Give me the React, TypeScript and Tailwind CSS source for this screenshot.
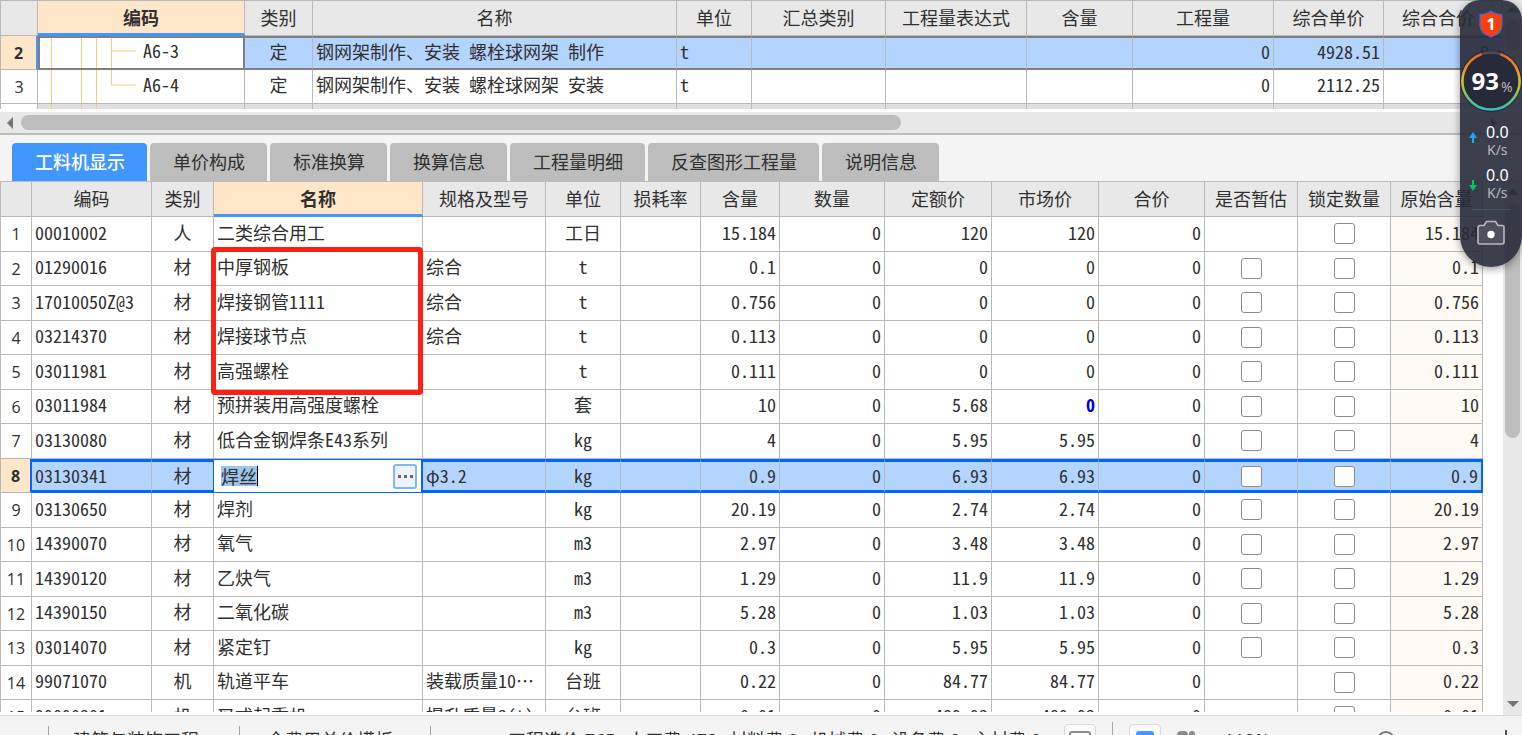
import { clsx } from "clsx";

const TEXT_FONT = "font-['Noto_Sans_CJK_SC',sans-serif] [font-feature-settings:'hwid']";
const UI_FONT = "font-['Open_Sans','Noto_Sans_CJK_SC',sans-serif]";
const LINE = "border-[#b9b9b9]";

interface Column {
  label: string;
  width?: number;
}

interface Resource {
  code: string;
  kind: string;
  name: string;
  spec?: string;
  unit: string;
  amount: string;
  quota: string;
  market: string;
  estimate?: boolean;
  changed?: boolean;
}

const itemColumns: Column[] = [
  { label: "编码", width: 207 },
  { label: "类别", width: 68 },
  { label: "名称" },
  { label: "单位", width: 75 },
  { label: "汇总类别", width: 134 },
  { label: "工程量表达式", width: 141 },
  { label: "含量", width: 106 },
  { label: "工程量", width: 141 },
  { label: "综合单价", width: 110 },
  { label: "综合合价", width: 109 },
  { label: "", width: 10 },
];

const items = [
  { no: 2, code: "A6-3", name: "钢网架制作、安装 螺栓球网架 制作", price: "4928.51", selected: true },
  { no: 3, code: "A6-4", name: "钢网架制作、安装 螺栓球网架 安装", price: "2112.25", selected: false },
];

const resourceColumns: Column[] = [
  { label: "编码", width: 120 },
  { label: "类别", width: 62 },
  { label: "名称" },
  { label: "规格及型号", width: 123 },
  { label: "单位", width: 75 },
  { label: "损耗率", width: 80 },
  { label: "含量", width: 79 },
  { label: "数量", width: 105 },
  { label: "定额价", width: 107 },
  { label: "市场价", width: 107 },
  { label: "合价", width: 106 },
  { label: "是否暂估", width: 93 },
  { label: "锁定数量", width: 93 },
  { label: "原始含量", width: 92 },
];

const resources: Resource[] = [
  { code: "00010002", kind: "人", name: "二类综合用工", unit: "工日", amount: "15.184", quota: "120", market: "120", estimate: false },
  { code: "01290016", kind: "材", name: "中厚钢板", spec: "综合", unit: "t", amount: "0.1", quota: "0", market: "0" },
  { code: "17010050Z@3", kind: "材", name: "焊接钢管1111", spec: "综合", unit: "t", amount: "0.756", quota: "0", market: "0" },
  { code: "03214370", kind: "材", name: "焊接球节点", spec: "综合", unit: "t", amount: "0.113", quota: "0", market: "0" },
  { code: "03011981", kind: "材", name: "高强螺栓", unit: "t", amount: "0.111", quota: "0", market: "0" },
  { code: "03011984", kind: "材", name: "预拼装用高强度螺栓", unit: "套", amount: "10", quota: "5.68", market: "0", changed: true },
  { code: "03130080", kind: "材", name: "低合金钢焊条E43系列", unit: "kg", amount: "4", quota: "5.95", market: "5.95" },
  { code: "03130341", kind: "材", name: "焊丝", spec: "φ3.2", unit: "kg", amount: "0.9", quota: "6.93", market: "6.93" },
  { code: "03130650", kind: "材", name: "焊剂", unit: "kg", amount: "20.19", quota: "2.74", market: "2.74" },
  { code: "14390070", kind: "材", name: "氧气", unit: "m3", amount: "2.97", quota: "3.48", market: "3.48" },
  { code: "14390120", kind: "材", name: "乙炔气", unit: "m3", amount: "1.29", quota: "11.9", market: "11.9" },
  { code: "14390150", kind: "材", name: "二氧化碳", unit: "m3", amount: "5.28", quota: "1.03", market: "1.03" },
  { code: "03014070", kind: "材", name: "紧定钉", unit: "kg", amount: "0.3", quota: "5.95", market: "5.95" },
  { code: "99071070", kind: "机", name: "轨道平车", spec: "装载质量10…", unit: "台班", amount: "0.22", quota: "84.77", market: "84.77", estimate: false },
  { code: "99090301", kind: "机", name: "叉式起重机", spec: "提升质量3(t)", unit: "台班", amount: "0.01", quota: "489.93", market: "489.93", estimate: false },
];

const ACTIVE_RESOURCE = "03130341";
const ANNOTATED_FROM = "01290016";

const tabs = ["工料机显示", "单价构成", "标准换算", "换算信息", "工程量明细", "反查图形工程量", "说明信息"];

const totals = ["工程造价:765", "人工费:473", "材料费:0", "机械费:0", "设备费:0", "主材费:0"];

function Arrow({ className }: { className?: string }) {
  return (
    <svg viewBox="0 0 12 6" className={clsx("h-[6px] w-3 fill-[#74747c]", className)} aria-hidden="true">
      <path d="M0 6L6 0L12 6Z" />
    </svg>
  );
}

function Cols({ first, columns }: { first: number; columns: Column[] }) {
  return (
    <colgroup>
      <col style={{ width: first }} />
      {columns.map((column, i) => (
        <col key={i} style={column.width ? { width: column.width } : undefined} />
      ))}
    </colgroup>
  );
}

function HeaderRow({ columns, active }: { columns: Column[]; active: string }) {
  return (
    <thead>
      <tr className="h-[35px]">
        <th className={clsx("border-x border-b bg-[#e8e8e8]", LINE)} />
        {columns.map((column, i) => (
          <th
            key={i}
            className={clsx(
              "overflow-hidden border-r px-0 pt-0 leading-6 whitespace-nowrap",
              LINE,
              column.label === active
                ? "border-b-3 border-b-[#4197ff] bg-[#ffe6c8] pb-px font-bold"
                : "border-b bg-[#e8e8e8] pb-[2px] font-normal",
            )}
          >
            {column.label}
          </th>
        ))}
      </tr>
    </thead>
  );
}

function TreeLines({ branch }: { branch: "middle" | "last" | "none" }) {
  return (
    <svg className="absolute inset-y-0 left-0 h-full w-[100px]" viewBox="0 0 100 34" preserveAspectRatio="none" fill="none" stroke="#ffc57a" aria-hidden="true">
      <path d="M13.5 0V34M43.5 0V34M58.5 0V34" />
      {branch === "middle" && <path d="M73.5 0V34M73.5 15.5H98" />}
      {branch === "last" && <path d="M73.5 0V15.5H98" />}
    </svg>
  );
}

function ItemGrid() {
  return (
    <section className="flex h-[109px] shrink-0 overflow-hidden">
      <table className={clsx("h-fit min-w-0 flex-1 table-fixed border-separate border-spacing-0 border-t", LINE)}>
        <Cols first={38} columns={itemColumns} />
        <HeaderRow columns={itemColumns} active="编码" />
        <tbody>
          {items.map((item) => {
            const cell = clsx(
              "px-[3px] pt-0 leading-6 whitespace-nowrap overflow-hidden border-r",
              LINE,
              item.selected ? "border-y-2 border-y-[#808080] bg-[#b3d4ff] pb-1" : "border-b pb-[5px]",
            );
            return (
              <tr key={item.no} className="h-[34px]">
                <td
                  className={clsx(
                    "border-b border-l p-0 text-center text-base",
                    UI_FONT,
                    LINE,
                    item.selected ? "border-r-2 border-r-[#4197ff] bg-[#ffe6c8] font-bold" : "border-r",
                  )}
                >
                  {item.no}
                </td>
                <td
                  className={clsx(
                    "relative overflow-hidden border-b px-0 pt-0 pb-[5px] leading-6",
                    item.selected ? "border-[#808080]" : ["border-r", LINE],
                  )}
                >
                  <TreeLines branch={item.selected ? "middle" : "last"} />
                  {item.selected && <span className="absolute inset-0 border-2 border-b-1 border-[#808080]" />}
                  <span className="ml-[105px]">{item.code}</span>
                </td>
                <td className={clsx(cell, "text-center")}>定</td>
                <td className={cell}>{item.name}</td>
                <td className={cell}>t</td>
                <td className={cell} />
                <td className={cell} />
                <td className={cell} />
                <td className={clsx(cell, "text-right")}>0</td>
                <td className={clsx(cell, "text-right")}>{item.price}</td>
                <td className={clsx(cell, "text-right")}>0</td>
                <td className={cell} />
              </tr>
            );
          })}
          <tr className="h-[34px]">
            <td className={clsx("border-x", LINE)} />
            {itemColumns.map((_, i) => (
              <td key={i} className={clsx("relative border-r bg-[#e0e0e0]", LINE)}>
                {i === 0 && <TreeLines branch="none" />}
              </td>
            ))}
          </tr>
        </tbody>
      </table>
      <div className="flex w-[19px] shrink-0 flex-col items-center gap-2 bg-[#e8e8e8] pt-[6px]">
        <Arrow />
        <div className="h-[30px] w-[15px] rounded-full bg-[#bdbdbd]" />
      </div>
    </section>
  );
}

function HorizontalScroll() {
  return (
    <div className="mt-[3px] flex h-[21px] shrink-0 items-center bg-[#e8e8e8] pr-[22px] pl-1">
      <Arrow className="-rotate-90" />
      <div className="ml-[5px] flex-1">
        <div className="h-[15px] w-[60%] rounded-full bg-[#bdbdbd]" />
      </div>
      <Arrow className="rotate-90" />
    </div>
  );
}

function DetailTabs() {
  return (
    <div className={clsx("flex h-[49px] shrink-0 items-end gap-[3px] border-t-2 border-b border-[#bdbdbd] bg-[#f4f4f4] pl-3", UI_FONT)} role="tablist">
      {tabs.map((tab, i) => (
        <button
          key={tab}
          type="button"
          role="tab"
          aria-selected={i === 0}
          className={clsx(
            "h-[38px] rounded-t-sm pr-[22px] pl-[23px] whitespace-nowrap",
            i === 0 ? "bg-[#4197ff] font-medium text-white" : "bg-[#bdbdbd]",
          )}
        >
          {tab}
        </button>
      ))}
    </div>
  );
}

function CheckCell({ className, label, shown = true }: { className: string; label: string; shown?: boolean }) {
  return (
    <td className={className}>
      {shown && (
        <input
          type="checkbox"
          aria-label={label}
          className="mx-auto mt-1 block size-[21px] appearance-none rounded-[3px] border border-[#8c8c8c] bg-white checked:bg-[#4197ff]"
        />
      )}
    </td>
  );
}

function ResourceRow({ row, index }: { row: Resource; index: number }) {
  const active = row.code === ACTIVE_RESOURCE;
  const cell = clsx(
    "px-[3px] pt-0 whitespace-nowrap border-r",
    active ? "border-y-3 border-y-[#0066ff] bg-[#b3d4ff] pb-[3px] leading-5" : "border-b pb-[5px] leading-6",
    LINE,
  );
  const right = clsx(cell, "text-right");
  const center = clsx(cell, "text-center");

  return (
    <tr className="odd:h-[35px] even:h-[34px]">
      <td
        className={clsx(
          "border-b border-l p-0 text-center text-base",
          UI_FONT,
          LINE,
          active ? "border-r-2 border-r-[#0066ff] bg-[#ffe6c8] font-bold" : "border-r",
        )}
      >
        {index + 1}
      </td>
      <td className={cell}>{row.code}</td>
      <td className={clsx(center, active && "border-r-[#0066ff]")}>{row.kind}</td>
      {active ? (
        <td className="border-y border-r-2 border-[#0066ff] bg-white p-0">
          <div className="flex items-center pr-1 pl-[7px]">
            <input
              aria-label="名称"
              defaultValue={row.name}
              size={4}
              className="box-content h-5 w-[36px] border-r border-black bg-[#9cc4ee] p-0 leading-5"
            />
            <button
              type="button"
              aria-label="选择"
              className="ml-auto flex h-[25px] w-6 items-center justify-center gap-[3px] rounded-[3px] border-2 border-[#7db9ee] bg-[#eef1f8]"
            >
              <i className="size-[3px] bg-[#666]" />
              <i className="size-[3px] bg-[#666]" />
              <i className="size-[3px] bg-[#666]" />
            </button>
          </div>
        </td>
      ) : (
        <td className={clsx(cell, "relative")}>
          {row.name}
          {row.code === ANNOTATED_FROM && (
            <span className="pointer-events-none absolute -top-[5px] -left-[3px] z-10 h-[148px] w-[calc(100%+4px)] rounded-sm border-5 border-[#ff2015]" />
          )}
        </td>
      )}
      <td className={cell}>{row.spec}</td>
      <td className={center}>{row.unit}</td>
      <td className={cell} />
      <td className={right}>{row.amount}</td>
      <td className={right}>0</td>
      <td className={right}>{row.quota}</td>
      <td className={clsx(right, row.changed && "font-bold text-[#0000e0]")}>{row.market}</td>
      <td className={right}>0</td>
      <CheckCell className={cell} label={`${row.name} 是否暂估`} shown={row.estimate !== false} />
      <CheckCell className={cell} label={`${row.name} 锁定数量`} />
      <td className={clsx(right, active ? "border-r-2 border-r-[#0066ff]" : "bg-[#fffaf4]")}>{row.amount}</td>
    </tr>
  );
}

function ResourceGrid() {
  return (
    <section className="flex min-h-0 flex-1">
      <div className="mb-[3px] min-w-0 flex-1 overflow-hidden pr-5">
        <table className="w-full table-fixed border-separate border-spacing-0">
          <Cols first={32} columns={resourceColumns} />
          <HeaderRow columns={resourceColumns} active="名称" />
          <tbody>
            {resources.map((row, i) => (
              <ResourceRow key={row.code} row={row} index={i} />
            ))}
          </tbody>
        </table>
      </div>
      <div className="flex w-[19px] shrink-0 flex-col items-center bg-[#e8e8e8] pt-[7px] pb-2">
        <Arrow />
        <div className="my-2 w-full flex-1 px-[2px]">
          <div className="h-[48%] rounded-full bg-[#bdbdbd]" />
        </div>
        <Arrow className="rotate-180" />
      </div>
    </section>
  );
}

function StatusBar() {
  return (
    <footer className={clsx("h-5 shrink-0 overflow-hidden border-t border-[#d8d8d8] bg-[#f4f4f4]", UI_FONT)}>
      <div className="flex h-12 items-center whitespace-nowrap">
        <span className="w-12 pl-[3px] text-[#2b6cb0]">›</span>
        <span className="w-[191px] border-l border-[#9aa2ad] pl-6">建筑与装饰工程</span>
        <span className="w-[191px] border-l border-[#9aa2ad] pl-[27px]">全费用单价模板</span>
        <div className="flex gap-3 border-l border-[#9aa2ad] pl-[77px]">
          {totals.map((total) => (
            <span key={total}>{total}</span>
          ))}
        </div>
        <div className="ml-auto flex items-center">
          <button type="button" aria-label="表格" className="flex size-8 justify-center rounded-sm border border-[#d9d9d9] bg-[#fafafa] pt-[6px]">
            <svg viewBox="0 0 22 20" className="h-5 w-[22px]" fill="#fff" stroke="#8c8c8c" strokeWidth="2">
              <rect x="1" y="1" width="20" height="17" rx="2" />
              <path d="M2 5H20" stroke="#a9cdf5" />
            </svg>
          </button>
          <span className="mx-4 h-9 w-px bg-[#a8a8a8]" />
          <button type="button" aria-label="单页" className="flex size-8 justify-center rounded-sm border border-[#d9d9d9] bg-[#fafafa] pt-[6px]">
            <span className="h-[18px] w-[18px] rounded-[3px] bg-[#4197ff]" />
          </button>
          <button type="button" aria-label="多页" className="ml-4 grid grid-cols-[11px_6px] gap-px">
            <span className="h-[18px] rounded-sm bg-[#8c8c8c]" />
            <span className="h-[18px] rounded-sm bg-[#8c8c8c]" />
          </button>
          <span className="ml-[29px] w-[58px]">110%</span>
          <input
            type="range"
            aria-label="缩放"
            defaultValue={50}
            className="h-[18px] w-[208px] appearance-none bg-transparent [&::-webkit-slider-thumb]:size-[18px] [&::-webkit-slider-thumb]:appearance-none [&::-webkit-slider-thumb]:rounded-full [&::-webkit-slider-thumb]:border-2 [&::-webkit-slider-thumb]:border-[#777] [&::-webkit-slider-thumb]:bg-white"
          />
          <button type="button" aria-label="放大" className="mr-2 ml-2 flex w-4 justify-center">
            <svg viewBox="0 0 16 20" className="h-5 w-4" stroke="#555" strokeWidth="2">
              <path d="M8 0V20M0 10H16" />
            </svg>
          </button>
        </div>
      </div>
    </footer>
  );
}

function NetSpeed({ direction }: { direction: "up" | "down" }) {
  return (
    <div className="flex items-center gap-[9px] pl-[9px]">
      <svg
        viewBox="0 0 8 11"
        className={clsx("h-[11px] w-2", direction === "up" ? "-mt-2 fill-[#1ca7ff]" : "mt-[2px] rotate-180 fill-[#0cbf63]")}
        aria-hidden="true"
      >
        <path d="M4 0L8 6H5V11H3V6H0Z" />
      </svg>
      <div className="text-center">
        <div className="text-base leading-[17px] text-white">0.0</div>
        <div className="text-sm leading-[17px] text-[#b5b6bc]">K/s</div>
      </div>
    </div>
  );
}

function SpeedWidget() {
  return (
    <aside className="absolute top-0 right-0 z-20 h-[267px] w-[62px] rounded-t-[20px] rounded-b-[31px] bg-[#272a38]/90 font-['Noto_Sans',sans-serif] shadow-[0_2px_8px_rgba(0,0,0,0.4)]">
      <svg viewBox="0 0 24 28" className="absolute top-[10px] left-[19px] h-7 w-6" aria-hidden="true">
        <path d="M12 1C15 3.5 19 4.5 23 4.5V15C23 21 18 25 12 27C6 25 1 21 1 15V4.5C5 4.5 9 3.5 12 1Z" fill="#f8400f" stroke="#4467dd" strokeWidth="1.2" />
      </svg>
      <span className="absolute top-[14px] left-[19px] w-6 text-center text-base leading-5 font-bold text-white">1</span>

      <div className="absolute top-[51px] -left-[2px] flex size-[64px] items-center justify-center">
        <svg viewBox="0 0 64 64" className="absolute inset-0" fill="none" aria-hidden="true">
          <defs>
            <linearGradient id="gauge" x1="0" y1="0" x2="0" y2="1">
              <stop offset="0" stopColor="#f0602a" />
              <stop offset="0.25" stopColor="#f09020" />
              <stop offset="0.5" stopColor="#d9bf20" />
              <stop offset="0.75" stopColor="#72c860" />
              <stop offset="1" stopColor="#2fc3c0" />
            </linearGradient>
          </defs>
          <circle cx="33" cy="30" r="31" fill="#272a38" />
          <circle cx="33" cy="30" r="28.5" stroke="#4a4c58" strokeWidth="2.5" />
          <path d="M42.5 3.1A28.5 28.5 0 1 1 23.5 3.1" stroke="url(#gauge)" strokeWidth="2.5" />
        </svg>
        <span className="relative -mt-1 ml-1 text-2xl font-bold text-white">93</span>
        <span className="relative mt-2 ml-[2px] text-sm text-[#b5b6bc]">%</span>
      </div>

      <div className="flex flex-col gap-[9px] pt-[124px]">
        <NetSpeed direction="up" />
        <NetSpeed direction="down" />
      </div>
      <div className="mx-3 mt-2 h-px bg-[#3d5761]" />
      <button type="button" aria-label="截图" className="absolute top-[220px] left-[17px]">
        <svg viewBox="0 0 28 26" className="h-[26px] w-7" fill="#4e505d" stroke="#b9bac0" strokeWidth="1.6">
          <path d="M3 5.5H7L9.5 1.5H18.5L21 5.5H25A2 2 0 0 1 27 7.5V22A2 2 0 0 1 25 24H3A2 2 0 0 1 1 22V7.5A2 2 0 0 1 3 5.5Z" />
          <circle cx="14" cy="14.5" r="3.7" fill="#fff" stroke="none" />
        </svg>
      </button>
    </aside>
  );
}

export default function App() {
  return (
    <div className={clsx("relative flex h-screen flex-col overflow-hidden bg-white text-lg text-[#303030]", TEXT_FONT)}>
      <ItemGrid />
      <HorizontalScroll />
      <DetailTabs />
      <ResourceGrid />
      <StatusBar />
      <SpeedWidget />
    </div>
  );
}
